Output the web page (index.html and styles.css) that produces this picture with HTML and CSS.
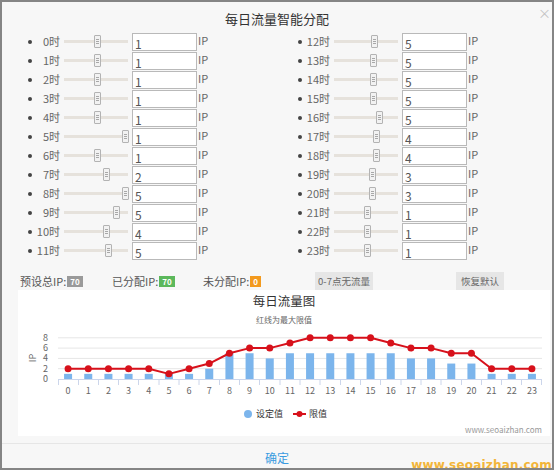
FILE: index.html
```html
<!DOCTYPE html>
<html lang="zh-CN">
<head>
<meta charset="utf-8">
<title>每日流量智能分配</title>
<link rel="stylesheet" href="styles.css">
</head>
<body>
<div class="dialog">
  <span class="close">×</span>
  <h1 class="title">每日流量智能分配</h1>
  <div class="rows">
    <div class="col">
      <div class="row"><span class="dot"></span><span class="lbl">0时</span><span class="slider"><span class="handle" style="left:30px"></span></span><input class="val" value="1"><span class="ip">IP</span></div>
      <div class="row"><span class="dot"></span><span class="lbl">1时</span><span class="slider"><span class="handle" style="left:30px"></span></span><input class="val" value="1"><span class="ip">IP</span></div>
      <div class="row"><span class="dot"></span><span class="lbl">2时</span><span class="slider"><span class="handle" style="left:30px"></span></span><input class="val" value="1"><span class="ip">IP</span></div>
      <div class="row"><span class="dot"></span><span class="lbl">3时</span><span class="slider"><span class="handle" style="left:30px"></span></span><input class="val" value="1"><span class="ip">IP</span></div>
      <div class="row"><span class="dot"></span><span class="lbl">4时</span><span class="slider"><span class="handle" style="left:30px"></span></span><input class="val" value="1"><span class="ip">IP</span></div>
      <div class="row"><span class="dot"></span><span class="lbl">5时</span><span class="slider"><span class="handle" style="left:58px"></span></span><input class="val" value="1"><span class="ip">IP</span></div>
      <div class="row"><span class="dot"></span><span class="lbl">6时</span><span class="slider"><span class="handle" style="left:30px"></span></span><input class="val" value="1"><span class="ip">IP</span></div>
      <div class="row"><span class="dot"></span><span class="lbl">7时</span><span class="slider"><span class="handle" style="left:39px"></span></span><input class="val" value="2"><span class="ip">IP</span></div>
      <div class="row"><span class="dot"></span><span class="lbl">8时</span><span class="slider"><span class="handle" style="left:58px"></span></span><input class="val" value="5"><span class="ip">IP</span></div>
      <div class="row"><span class="dot"></span><span class="lbl">9时</span><span class="slider"><span class="handle" style="left:49px"></span></span><input class="val" value="5"><span class="ip">IP</span></div>
      <div class="row"><span class="dot"></span><span class="lbl">10时</span><span class="slider"><span class="handle" style="left:39px"></span></span><input class="val" value="4"><span class="ip">IP</span></div>
      <div class="row"><span class="dot"></span><span class="lbl">11时</span><span class="slider"><span class="handle" style="left:41px"></span></span><input class="val" value="5"><span class="ip">IP</span></div>
    </div>
    <div class="col">
      <div class="row"><span class="dot"></span><span class="lbl">12时</span><span class="slider"><span class="handle" style="left:37px"></span></span><input class="val" value="5"><span class="ip">IP</span></div>
      <div class="row"><span class="dot"></span><span class="lbl">13时</span><span class="slider"><span class="handle" style="left:36px"></span></span><input class="val" value="5"><span class="ip">IP</span></div>
      <div class="row"><span class="dot"></span><span class="lbl">14时</span><span class="slider"><span class="handle" style="left:36px"></span></span><input class="val" value="5"><span class="ip">IP</span></div>
      <div class="row"><span class="dot"></span><span class="lbl">15时</span><span class="slider"><span class="handle" style="left:36px"></span></span><input class="val" value="5"><span class="ip">IP</span></div>
      <div class="row"><span class="dot"></span><span class="lbl">16时</span><span class="slider"><span class="handle" style="left:42px"></span></span><input class="val" value="5"><span class="ip">IP</span></div>
      <div class="row"><span class="dot"></span><span class="lbl">17时</span><span class="slider"><span class="handle" style="left:39px"></span></span><input class="val" value="4"><span class="ip">IP</span></div>
      <div class="row"><span class="dot"></span><span class="lbl">18时</span><span class="slider"><span class="handle" style="left:39px"></span></span><input class="val" value="4"><span class="ip">IP</span></div>
      <div class="row"><span class="dot"></span><span class="lbl">19时</span><span class="slider"><span class="handle" style="left:35px"></span></span><input class="val" value="3"><span class="ip">IP</span></div>
      <div class="row"><span class="dot"></span><span class="lbl">20时</span><span class="slider"><span class="handle" style="left:35px"></span></span><input class="val" value="3"><span class="ip">IP</span></div>
      <div class="row"><span class="dot"></span><span class="lbl">21时</span><span class="slider"><span class="handle" style="left:30px"></span></span><input class="val" value="1"><span class="ip">IP</span></div>
      <div class="row"><span class="dot"></span><span class="lbl">22时</span><span class="slider"><span class="handle" style="left:30px"></span></span><input class="val" value="1"><span class="ip">IP</span></div>
      <div class="row"><span class="dot"></span><span class="lbl">23时</span><span class="slider"><span class="handle" style="left:30px"></span></span><input class="val" value="1"><span class="ip">IP</span></div>
    </div>
  </div>

  <div class="stats">
    <span class="stat s1">预设总IP:<span class="badge grey">70</span></span>
    <span class="stat s2">已分配IP:<span class="badge green">70</span></span>
    <span class="stat s3">未分配IP:<span class="badge orange">0</span></span>
    <span class="btn b1">0-7点无流量</span>
    <span class="btn b2">恢复默认</span>
  </div>

  <div class="chart">
    <svg width="532" height="146" viewBox="0 0 532 146" xmlns="http://www.w3.org/2000/svg">
      <text class="c-title" x="266" y="15.5" text-anchor="middle">每日流量图</text>
      <text class="c-sub" x="266" y="33" text-anchor="middle">红线为最大限值</text>

      <g stroke="#e6e6e6" stroke-width="1">
        <line x1="40" y1="47.8" x2="524" y2="47.8"/>
        <line x1="40" y1="58.1" x2="524" y2="58.1"/>
        <line x1="40" y1="68.4" x2="524" y2="68.4"/>
        <line x1="40" y1="78.7" x2="524" y2="78.7"/>
      </g>

      <g class="c-axis" text-anchor="end">
        <text x="30" y="50.8">8</text>
        <text x="30" y="61.1">6</text>
        <text x="30" y="71.4">4</text>
        <text x="30" y="81.7">2</text>
        <text x="30" y="92">0</text>
      </g>
      <text class="c-axis" transform="translate(17.5 68) rotate(-90)" text-anchor="middle">IP</text>

      <g fill="#7cb5ec">
        <rect x="46.08" y="83.85" width="8" height="5.15"/>
        <rect x="66.25" y="83.85" width="8" height="5.15"/>
        <rect x="86.42" y="83.85" width="8" height="5.15"/>
        <rect x="106.58" y="83.85" width="8" height="5.15"/>
        <rect x="126.75" y="83.85" width="8" height="5.15"/>
        <rect x="146.92" y="83.85" width="8" height="5.15"/>
        <rect x="167.08" y="83.85" width="8" height="5.15"/>
        <rect x="187.25" y="78.7" width="8" height="10.3"/>
        <rect x="207.42" y="63.25" width="8" height="25.75"/>
        <rect x="227.58" y="63.25" width="8" height="25.75"/>
        <rect x="247.75" y="68.4" width="8" height="20.6"/>
        <rect x="267.92" y="63.25" width="8" height="25.75"/>
        <rect x="288.08" y="63.25" width="8" height="25.75"/>
        <rect x="308.25" y="63.25" width="8" height="25.75"/>
        <rect x="328.42" y="63.25" width="8" height="25.75"/>
        <rect x="348.58" y="63.25" width="8" height="25.75"/>
        <rect x="368.75" y="63.25" width="8" height="25.75"/>
        <rect x="388.92" y="68.4" width="8" height="20.6"/>
        <rect x="409.08" y="68.4" width="8" height="20.6"/>
        <rect x="429.25" y="73.55" width="8" height="15.45"/>
        <rect x="449.42" y="73.55" width="8" height="15.45"/>
        <rect x="469.58" y="83.85" width="8" height="5.15"/>
        <rect x="489.75" y="83.85" width="8" height="5.15"/>
        <rect x="509.92" y="83.85" width="8" height="5.15"/>
      </g>

      <g stroke="#ccd6eb" stroke-width="1">
        <line x1="40" y1="89.5" x2="524" y2="89.5"/>
        <line x1="40.5" y1="89" x2="40.5" y2="95"/>
        <line x1="60.5" y1="89" x2="60.5" y2="95"/>
        <line x1="80.5" y1="89" x2="80.5" y2="95"/>
        <line x1="100.5" y1="89" x2="100.5" y2="95"/>
        <line x1="120.5" y1="89" x2="120.5" y2="95"/>
        <line x1="141" y1="89" x2="141" y2="95"/>
        <line x1="161" y1="89" x2="161" y2="95"/>
        <line x1="181" y1="89" x2="181" y2="95"/>
        <line x1="201.5" y1="89" x2="201.5" y2="95"/>
        <line x1="221.5" y1="89" x2="221.5" y2="95"/>
        <line x1="241.5" y1="89" x2="241.5" y2="95"/>
        <line x1="262" y1="89" x2="262" y2="95"/>
        <line x1="282" y1="89" x2="282" y2="95"/>
        <line x1="302" y1="89" x2="302" y2="95"/>
        <line x1="322.5" y1="89" x2="322.5" y2="95"/>
        <line x1="342.5" y1="89" x2="342.5" y2="95"/>
        <line x1="362.5" y1="89" x2="362.5" y2="95"/>
        <line x1="383" y1="89" x2="383" y2="95"/>
        <line x1="403" y1="89" x2="403" y2="95"/>
        <line x1="423" y1="89" x2="423" y2="95"/>
        <line x1="443.5" y1="89" x2="443.5" y2="95"/>
        <line x1="463.5" y1="89" x2="463.5" y2="95"/>
        <line x1="483.5" y1="89" x2="483.5" y2="95"/>
        <line x1="503.5" y1="89" x2="503.5" y2="95"/>
        <line x1="523.5" y1="89" x2="523.5" y2="95"/>
      </g>

      <g class="c-axis" text-anchor="middle">
        <text x="50.08" y="103.5">0</text>
        <text x="70.25" y="103.5">1</text>
        <text x="90.42" y="103.5">2</text>
        <text x="110.58" y="103.5">3</text>
        <text x="130.75" y="103.5">4</text>
        <text x="150.92" y="103.5">5</text>
        <text x="171.08" y="103.5">6</text>
        <text x="191.25" y="103.5">7</text>
        <text x="211.42" y="103.5">8</text>
        <text x="231.58" y="103.5">9</text>
        <text x="251.75" y="103.5">10</text>
        <text x="271.92" y="103.5">11</text>
        <text x="292.08" y="103.5">12</text>
        <text x="312.25" y="103.5">13</text>
        <text x="332.42" y="103.5">14</text>
        <text x="352.58" y="103.5">15</text>
        <text x="372.75" y="103.5">16</text>
        <text x="392.92" y="103.5">17</text>
        <text x="413.08" y="103.5">18</text>
        <text x="433.25" y="103.5">19</text>
        <text x="453.42" y="103.5">20</text>
        <text x="473.58" y="103.5">21</text>
        <text x="493.75" y="103.5">22</text>
        <text x="513.92" y="103.5">23</text>
      </g>

      <polyline fill="none" stroke="#d7111b" stroke-width="2" stroke-linejoin="round"
        points="50.08,78.7 70.25,78.7 90.42,78.7 110.58,78.7 130.75,78.7 150.92,83.85 171.08,78.7 191.25,73.55 211.42,63.25 231.58,58.1 251.75,58.1 271.92,52.95 292.08,47.8 312.25,47.8 332.42,47.8 352.58,47.8 372.75,52.95 392.92,58.1 413.08,58.1 433.25,63.25 453.42,63.25 473.58,78.7 493.75,78.7 513.92,78.7"/>
      <g fill="#d7111b">
        <circle cx="50.08" cy="78.7" r="3.5"/>
        <circle cx="70.25" cy="78.7" r="3.5"/>
        <circle cx="90.42" cy="78.7" r="3.5"/>
        <circle cx="110.58" cy="78.7" r="3.5"/>
        <circle cx="130.75" cy="78.7" r="3.5"/>
        <circle cx="150.92" cy="83.85" r="3.5"/>
        <circle cx="171.08" cy="78.7" r="3.5"/>
        <circle cx="191.25" cy="73.55" r="3.5"/>
        <circle cx="211.42" cy="63.25" r="3.5"/>
        <circle cx="231.58" cy="58.1" r="3.5"/>
        <circle cx="251.75" cy="58.1" r="3.5"/>
        <circle cx="271.92" cy="52.95" r="3.5"/>
        <circle cx="292.08" cy="47.8" r="3.5"/>
        <circle cx="312.25" cy="47.8" r="3.5"/>
        <circle cx="332.42" cy="47.8" r="3.5"/>
        <circle cx="352.58" cy="47.8" r="3.5"/>
        <circle cx="372.75" cy="52.95" r="3.5"/>
        <circle cx="392.92" cy="58.1" r="3.5"/>
        <circle cx="413.08" cy="58.1" r="3.5"/>
        <circle cx="433.25" cy="63.25" r="3.5"/>
        <circle cx="453.42" cy="63.25" r="3.5"/>
        <circle cx="473.58" cy="78.7" r="3.5"/>
        <circle cx="493.75" cy="78.7" r="3.5"/>
        <circle cx="513.92" cy="78.7" r="3.5"/>
      </g>

      <circle cx="230" cy="124" r="4" fill="#7cb5ec"/>
      <text class="c-legend" x="238" y="127">设定值</text>
      <line x1="275" y1="124" x2="288" y2="124" stroke="#d7111b" stroke-width="2"/>
      <circle cx="281.5" cy="124" r="3" fill="#d7111b"/>
      <text class="c-legend" x="291" y="127">限值</text>

      <text class="c-credit" x="524" y="143" text-anchor="end">www.seoaizhan.com</text>
    </svg>
  </div>

  <div class="footer">确定</div>
  <div class="watermark">www.seoaizhan.com</div>
</div>
</body>
</html>
```

FILE: styles.css
```css
* { box-sizing: border-box; }

body {
  margin: 0;
  font-family: "Noto Sans CJK SC", "Noto Sans", sans-serif;
  background: #ffffff;
}

.dialog {
  position: relative;
  width: 554px;
  height: 470px;
  border: 2px solid #858585;
  background: #f7f7f7;
  overflow: hidden;
}

.close {
  position: absolute;
  top: 3px;
  right: 1px;
  font-size: 13px;
  line-height: 16px;
  color: #c4c4c4;
}

.title {
  margin: 0;
  height: 30px;
  padding-top: 7px;
  text-align: center;
  font-size: 13px;
  line-height: 20px;
  font-weight: normal;
  color: #333;
}

.rows {
  display: grid;
  grid-template-columns: 270px 270px;
  padding-left: 26px;
}

.col {
  display: flex;
  flex-direction: column;
}

.row {
  display: flex;
  align-items: center;
  height: 19px;
}

.dot {
  flex: none;
  width: 4px;
  height: 4px;
  border-radius: 50%;
  background: #444;
}

.lbl {
  flex: none;
  width: 28px;
  text-align: right;
  font-size: 11px;
  line-height: 12px;
  color: #666;
  margin-top: -2px;
}

.slider {
  flex: none;
  position: relative;
  width: 64px;
  height: 3px;
  margin-left: 4px;
  background: #e6e2dc;
}

.handle {
  position: absolute;
  top: -5px;
  width: 7px;
  height: 13px;
  border: 1px solid #b3b3b3;
  border-radius: 1px;
  background: #f2f2f2;
}

.handle::before {
  content: "";
  position: absolute;
  left: 1px;
  top: 3px;
  width: 3px;
  height: 1px;
  background: #a8a8a8;
  box-shadow: 0 2px 0 #a8a8a8, 0 4px 0 #a8a8a8;
}

.val {
  flex: none;
  width: 65px;
  height: 18px;
  margin: 0 0 0 4px;
  padding: 3px 2px 0;
  border: 1px solid #b9b9b9;
  border-radius: 0;
  background: #fff;
  font-family: "Noto Sans CJK SC", "Noto Sans", sans-serif;
  font-size: 12px;
  line-height: 14px;
  color: #555;
  outline: none;
}

.ip {
  flex: none;
  margin-left: 1px;
  margin-top: -3px;
  font-size: 11px;
  line-height: 12px;
  color: #666;
}

.stats {
  display: flex;
  align-items: center;
  height: 18px;
  margin-top: 12px;
  padding-left: 18px;
  font-size: 11px;
  color: #555;
}

.stat {
  flex: none;
  display: flex;
  align-items: center;
}

.s1 { width: 92px; }
.s2 { width: 91px; }
.s3 { width: 112px; }

.badge {
  display: inline-block;
  margin-left: 1px;
  padding: 0 3px;
  font-size: 8px;
  font-weight: bold;
  line-height: 11px;
  color: #fff;
}

.grey { background: #9a9a9a; }
.green { background: #5cb85c; }
.orange { background: #f39a1e; }

.btn {
  flex: none;
  height: 18px;
  background: #e6e6e6;
  text-align: center;
  font-size: 9.5px;
  line-height: 18px;
  color: #666;
}

.b1 { width: 58px; }
.b2 { width: 48px; margin-left: 83px; }

.chart {
  width: 532px;
  height: 146px;
  margin-left: 16px;
  background: #fff;
}

.chart svg { display: block; }

.c-title { font-size: 12.5px; fill: #333; }
.c-sub { font-size: 8px; fill: #666; }
.c-axis { font-size: 9px; fill: #666; }
.c-legend { font-size: 9px; fill: #333; }
.c-credit { font-size: 8px; fill: #999; }

.footer {
  height: 25px;
  margin-top: 7px;
  padding-top: 4px;
  border-top: 1px solid #e6e6e6;
  text-align: center;
  font-size: 12px;
  line-height: 20px;
  color: #3a9be0;
}

.watermark {
  position: absolute;
  right: 0;
  bottom: -4px;
  font-family: "DejaVu Sans", sans-serif;
  font-weight: bold;
  font-size: 12px;
  letter-spacing: 0.2px;
  color: #f2b53a;
}
```
